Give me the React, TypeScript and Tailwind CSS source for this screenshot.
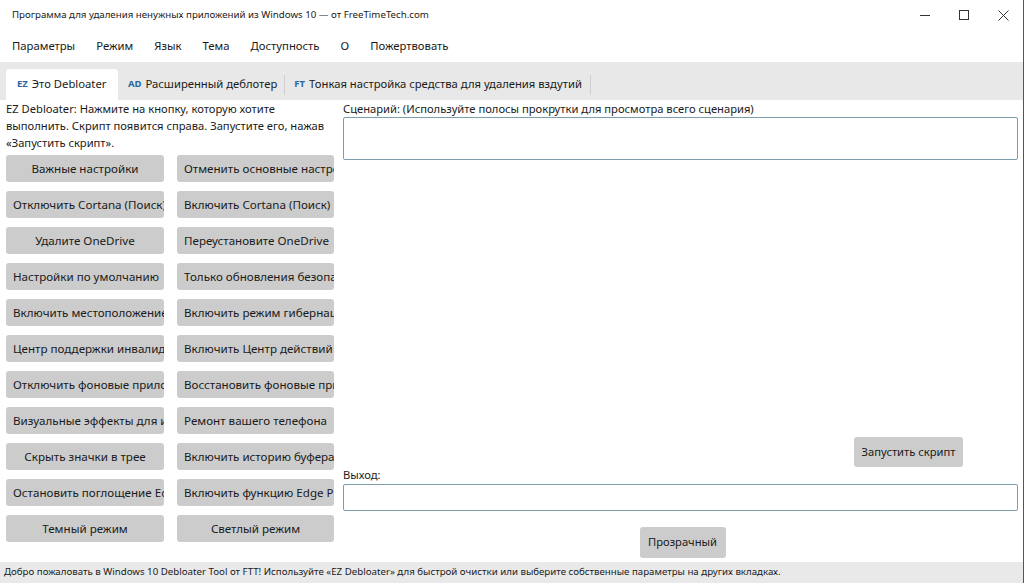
import React from "react";

const left = [
  "Важные настройки",
  "Отключить Cortana (Поиск)",
  "Удалите OneDrive",
  "Настройки по умолчанию",
  "Включить местоположение",
  "Центр поддержки инвалидов",
  "Отключить фоновые приложения",
  "Визуальные эффекты для игр",
  "Скрыть значки в трее",
  "Остановить поглощение Edge",
  "Темный режим",
];
const right = [
  "Отменить основные настройки",
  "Включить Cortana (Поиск)",
  "Переустановите OneDrive",
  "Только обновления безопасности",
  "Включить режим гибернации",
  "Включить Центр действий",
  "Восстановить фоновые приложения",
  "Ремонт вашего телефона",
  "Включить историю буфера",
  "Включить функцию Edge PDF",
  "Светлый режим",
];

function Btn({ label }: { label: string }) {
  return (
    <div className="h-[27px] rounded-[3px] bg-[#cccccc] overflow-hidden whitespace-nowrap text-center leading-[27px] px-[7px] text-[11.6px] text-[#1a1a1a]">
      {label}
    </div>
  );
}

export default function App() {
  return (
    <div
      className="w-[1024px] h-[583px] bg-white flex flex-col overflow-hidden text-[#1a1a1a] border-r border-[#555]"
      style={{ fontFamily: '"Noto Sans", "Open Sans", sans-serif' }}
    >
      {/* title bar */}
      <div className="h-[30px] flex items-center shrink-0">
        <div className="pl-[12px] pt-[1px] text-[9.7px] text-[#1a1a1a] flex-1">
          Программа для удаления ненужных приложений из Windows 10 — от FreeTimeTech.com
        </div>
        <div className="flex items-center h-full">
          <div className="w-[39px] h-full flex items-center justify-center">
            <div className="w-[10px] h-[1px] bg-[#333]" />
          </div>
          <div className="w-[39px] h-full flex items-center justify-center">
            <div className="w-[10px] h-[10px] border border-[#333]" />
          </div>
          <div className="w-[40px] h-full flex items-center justify-center">
            <svg width="11" height="11" viewBox="0 0 11 11">
              <path d="M0.5 0.5 L10.5 10.5 M10.5 0.5 L0.5 10.5" stroke="#333" strokeWidth="1" />
            </svg>
          </div>
        </div>
      </div>

      {/* menu bar */}
      <div className="h-[32px] flex items-center text-[11.3px] shrink-0 pl-[12px] gap-[21px]">
        <span>Параметры</span>
        <span>Режим</span>
        <span>Язык</span>
        <span>Тема</span>
        <span>Доступность</span>
        <span>О</span>
        <span>Пожертвовать</span>
      </div>

      {/* tab strip */}
      <div className="h-[38px] bg-[#e8e8e8] flex items-end pl-[6px] shrink-0 text-[11.25px]">
        <div className="h-[31px] w-[112px] bg-white rounded-t-[4px] flex items-center pl-[11px] gap-[4px]">
          <span className="text-[9.5px] font-bold text-[#2a67a0]">EZ</span>
          <span>Это Debloater</span>
        </div>
        <div className="h-[31px] flex items-center pl-[10px] pr-[7px] gap-[4px]">
          <span className="text-[9.5px] font-bold text-[#2a67a0]">AD</span>
          <span>Расширенный деблотер</span>
        </div>
        <div className="h-[20px] w-[1px] bg-[#cfcfcf] mb-[5px]" />
        <div className="h-[31px] flex items-center pl-[9px] pr-[8px] gap-[4px]">
          <span className="text-[9.5px] font-bold text-[#2a67a0]">FT</span>
          <span>Тонкая настройка средства для удаления вздутий</span>
        </div>
        <div className="h-[20px] w-[1px] bg-[#cfcfcf] mb-[5px]" />
      </div>

      {/* content */}
      <div className="flex flex-1 min-h-0">
        {/* left panel */}
        <div className="w-[343px] shrink-0 pl-[6px] pr-[9px] flex flex-col">
          <div className="text-[11.2px] leading-[17px] w-[330px]">
            EZ Debloater: Нажмите на кнопку, которую хотите выполнить. Скрипт появится справа. Запустите его, нажав «Запустить скрипт».
          </div>
          <div className="grid grid-cols-[158px_157px] gap-x-[13px] gap-y-[9px] mt-[4px]">
            {left.map((l, i) => (
              <React.Fragment key={i}>
                <Btn label={l} />
                <Btn label={right[i]} />
              </React.Fragment>
            ))}
          </div>
        </div>

        {/* right panel */}
        <div className="flex-1 pr-[5px] pt-[1px] flex flex-col text-[11.2px]">
          <div className="leading-[15px]">Сценарий: (Используйте полосы прокрутки для просмотра всего сценария)</div>
          <div className="h-[43px] border border-[#7f9eab] rounded-[2px] mt-[1px]" />
          <div className="flex-1" />
          <div className="flex justify-end pr-[55px]">
            <div className="w-[109px] h-[30px] bg-[#cccccc] rounded-[3px] flex items-center justify-center">
              Запустить скрипт
            </div>
          </div>
          <div className="leading-[15px]">Выход:</div>
          <div className="h-[27px] border border-[#7f9eab] rounded-[2px] mt-[2px]" />
          <div className="flex justify-center mt-[16px] mb-[4px] pl-[4px]">
            <div className="w-[86px] h-[31px] bg-[#cccccc] rounded-[3px] flex items-center justify-center">
              Прозрачный
            </div>
          </div>
        </div>
      </div>

      {/* status bar */}
      <div className="h-[21px] bg-[#e9e9e9] shrink-0 flex items-center pl-[4px] text-[9.7px] whitespace-nowrap">
        Добро пожаловать в Windows 10 Debloater Tool от FTT! Используйте «EZ Debloater» для быстрой очистки или выберите собственные параметры на других вкладках.
      </div>
    </div>
  );
}
